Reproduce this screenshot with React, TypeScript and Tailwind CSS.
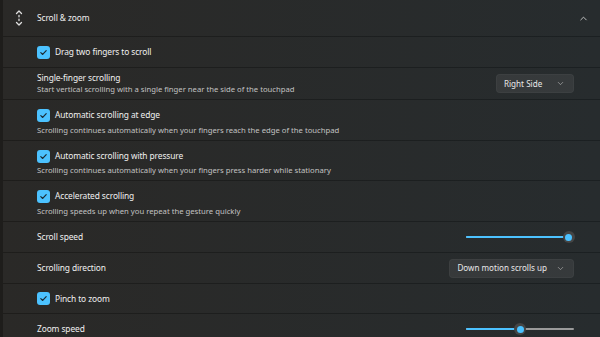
import { ChevronDown, ChevronUp } from "lucide-react";

const font = { fontFamily: '"Noto Sans", "Open Sans", sans-serif' };

function Check() {
  return (
    <span className="w-[13px] h-[13px] rounded-[3px] bg-[#4cc2ff] flex items-center justify-center shrink-0">
      <svg width="9" height="9" viewBox="0 0 10 10" fill="none">
        <path d="M2 5.2 L4.1 7.2 L8 2.9" stroke="#1b2a33" strokeWidth="1.3" strokeLinecap="round" strokeLinejoin="round" />
      </svg>
    </span>
  );
}

function Dropdown({ label }: { label: string }) {
  return (
    <div className="h-[19px] min-w-[78px] rounded-[4px] bg-white/[0.07] border border-white/[0.03] flex items-center justify-between pl-[7px] pr-[8px] gap-[9px]">
      <span className="text-[8.1px] leading-[12px] text-[#e8e8e8]">{label}</span>
      <ChevronDown size={9} strokeWidth={1.6} className="text-[#bdbdbd]" />
    </div>
  );
}

function Slider({ pct }: { pct: number }) {
  return (
    <div className="relative w-[108px] h-[14px] flex items-center">
      <div className="h-[2px] w-full rounded-full bg-[#9a9a9a]" />
      <div className="absolute left-0 h-[2px] rounded-full bg-[#4cc2ff]" style={{ width: `${pct}%` }} />
      <div
        className="absolute w-[12px] h-[12px] -ml-[6px] rounded-full bg-[#454545] flex items-center justify-center"
        style={{ left: `${pct}%` }}
      >
        <span className="w-[7px] h-[7px] rounded-full bg-[#4cc2ff]" />
      </div>
    </div>
  );
}

function Title({ text }: { text: string }) {
  return <span className="block text-[8.4px] tracking-[-0.1px] leading-[12px] text-[#f0f0f0]">{text}</span>;
}

function CheckLabel({ text }: { text: string }) {
  return (
    <div className="h-[14px] flex items-center gap-[5px]">
      <Check />
      <Title text={text} />
    </div>
  );
}

function Desc({ text, className = "" }: { text: string; className?: string }) {
  return <span className={`block text-[7.7px] text-[#c2c2c2] leading-[10px] ${className}`}>{text}</span>;
}

const rowBg = "bg-white/[0.055]";

export default function App() {
  return (
    <div
      style={font}
      className="w-[600px] h-[337px] overflow-hidden bg-gradient-to-r from-[#1e1d1b] to-[#1b2022] pl-[3px] flex flex-col gap-px"
    >
      {/* header */}
      <div className={`h-[36px] shrink-0 ${rowBg} flex items-center pl-[10px] pr-[11px]`}>
        <svg width="12" height="18" viewBox="0 0 12 18" fill="none" className="mr-[12px]">
          <path d="M3.5 4.5 L6 2 L8.5 4.5" stroke="#e0e0e0" strokeWidth="1.3" strokeLinecap="round" strokeLinejoin="round" />
          <path d="M6 6.5 V7.8 M6 10.2 V11.5" stroke="#e0e0e0" strokeWidth="1.3" strokeLinecap="round" />
          <path d="M3.5 13.5 L6 16 L8.5 13.5" stroke="#e0e0e0" strokeWidth="1.3" strokeLinecap="round" strokeLinejoin="round" />
        </svg>
        <span className="flex-1 text-[8.4px] tracking-[-0.1px] text-[#f0f0f0]">Scroll &amp; zoom</span>
        <ChevronUp size={11} strokeWidth={1.8} className="text-[#dcdcdc]" />
      </div>

      <div className={`h-[30px] shrink-0 ${rowBg} flex items-center pl-[34px]`}>
        <CheckLabel text="Drag two fingers to scroll" />
      </div>

      <div className={`h-[31px] shrink-0 ${rowBg} flex items-center pl-[34px] pr-[26px]`}>
        <div className="flex-1 pb-[1px]">
          <Title text="Single-finger scrolling" />
          <Desc text="Start vertical scrolling with a single finger near the side of the touchpad" />
        </div>
        <Dropdown label="Right Side" />
      </div>

      <div className={`h-[40px] shrink-0 ${rowBg} pl-[34px] pt-[8px]`}>
        <CheckLabel text="Automatic scrolling at edge" />
        <Desc className="mt-[3px]" text="Scrolling continues automatically when your fingers reach the edge of the touchpad" />
      </div>

      <div className={`h-[39px] shrink-0 ${rowBg} pl-[34px] pt-[8px]`}>
        <CheckLabel text="Automatic scrolling with pressure" />
        <Desc className="mt-[2px]" text="Scrolling continues automatically when your fingers press harder while stationary" />
      </div>

      <div className={`h-[40px] shrink-0 ${rowBg} pl-[34px] pt-[8px]`}>
        <CheckLabel text="Accelerated scrolling" />
        <Desc className="mt-[3px]" text="Scrolling speeds up when you repeat the gesture quickly" />
      </div>

      <div className={`h-[30px] shrink-0 ${rowBg} flex items-center pl-[34px] pr-[26px]`}>
        <div className="flex-1">
          <Title text="Scroll speed" />
        </div>
        <Slider pct={95} />
      </div>

      <div className={`h-[30px] shrink-0 ${rowBg} flex items-center pl-[34px] pr-[26px]`}>
        <div className="flex-1">
          <Title text="Scrolling direction" />
        </div>
        <Dropdown label="Down motion scrolls up" />
      </div>

      <div className={`h-[29px] shrink-0 ${rowBg} flex items-center pl-[34px]`}>
        <CheckLabel text="Pinch to zoom" />
      </div>

      <div className={`h-[30px] shrink-0 ${rowBg} flex items-center pl-[34px] pr-[26px]`}>
        <div className="flex-1">
          <Title text="Zoom speed" />
        </div>
        <Slider pct={50} />
      </div>
    </div>
  );
}
